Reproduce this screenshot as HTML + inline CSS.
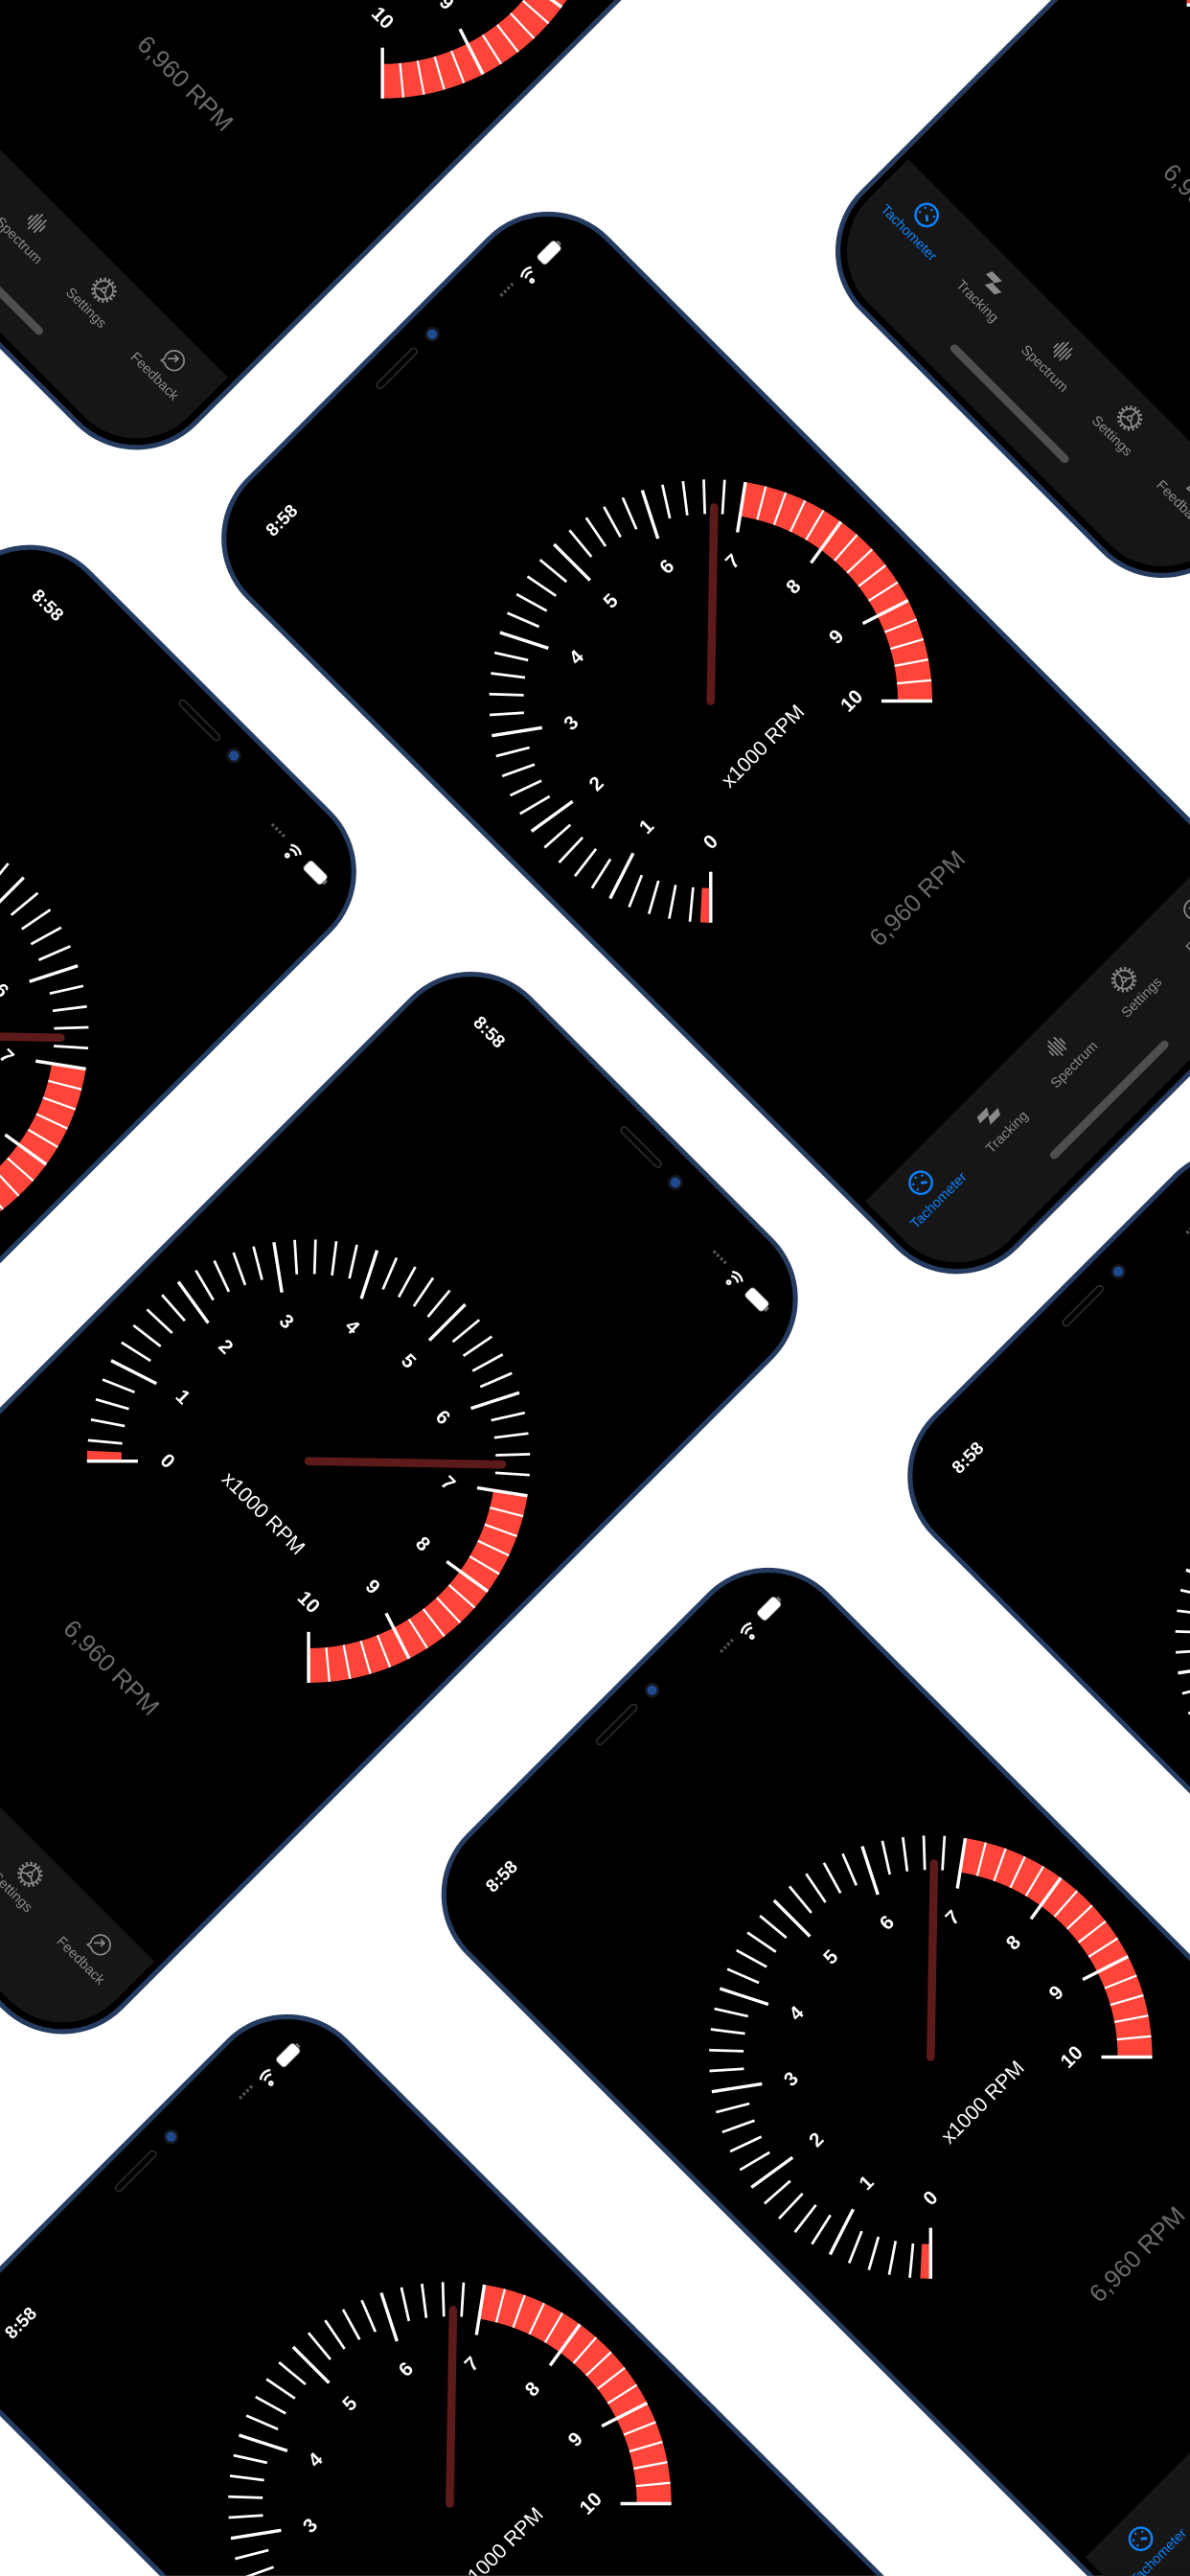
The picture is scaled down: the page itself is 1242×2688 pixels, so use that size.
<!DOCTYPE html>
<html><head><meta charset="utf-8">
<style>
html,body{margin:0;padding:0;width:1242px;height:2688px;overflow:hidden}
body{background:#fff;font-family:"Liberation Sans",sans-serif}
#clip{position:relative;width:1242px;height:2688px;overflow:hidden;background:#fff}
#wrap{position:absolute;left:0;top:0;width:725px;height:1569px;transform:scale(1.713103);transform-origin:0 0;overflow:hidden}
.ph{position:absolute;width:0;height:0}
.ph>*{position:absolute}
.fr{left:-156px;top:-296px;width:312px;height:664px;border-radius:52px;background:#000;border:3px solid #253b60;box-sizing:border-box}
.tb{left:-149px;top:282px;width:298px;height:79px;background:#161616;border-radius:0 0 45px 45px}
.hi{left:-50px;top:341px;width:100px;height:4.5px;border-radius:3px;background:#4f4f4f}
.tm{left:-129px;top:-269px;width:44px;text-align:center;font-weight:bold;font-size:11px;line-height:14px;color:#fff}
.sig{left:84px;top:-266px;width:12px;height:2px;background:repeating-linear-gradient(90deg,#555 0 1.6px,transparent 1.6px 3px)}
.st{left:99px;top:-270px;width:36px;height:14px}
.spk{left:-9px;top:-281px;width:34px;height:5px;border-radius:3px;border:0.6px solid #2a2a2a;box-sizing:border-box}
.cam{left:35px;top:-281px;width:6px;height:6px;border-radius:50%;background:#1f4a8f;box-shadow:0 0 0 1.6px #14171d}
.g{left:-150px;top:-150px;width:300px;height:300px;overflow:visible}
.u{left:-50px;top:34px;width:106px;text-align:center;font-size:12.5px;line-height:16px;color:#fff}
.rpm{left:-56px;top:166px;width:120px;text-align:center;font-size:15px;line-height:18px;color:#6a6a6a}
.ti{top:290px;width:60px;text-align:center;font-size:8.5px;line-height:10px;color:#8a8a8a}
.ti svg{display:block;margin:0 auto 2px;width:16px;height:16px}
.ti.a{color:#0a84ff}
</style></head><body>
<div id="clip">
<svg width="0" height="0" style="position:absolute">
<defs>
<g id="gauge">
<path d="M109.2,-79.35 A135,135 0 0 1 95.46,95.46 L80.6,80.6 A114,114 0 0 0 92.2,-67 Z" fill="#ff453a"/>
<path d="M-95.46,95.46 L-99.85,90.86 L-84.3,76.7 L-80.6,80.6 Z" fill="#ff453a"/>
<g stroke="#fff" stroke-width="1.6">
<line x1="104" x2="135" transform="rotate(135)" stroke-width="2"/>
<line x1="114" x2="135" transform="rotate(140.4)"/><line x1="114" x2="135" transform="rotate(145.8)"/><line x1="114" x2="135" transform="rotate(151.2)"/><line x1="114" x2="135" transform="rotate(156.6)"/>
<line x1="104" x2="135" transform="rotate(162)" stroke-width="2"/>
<line x1="114" x2="135" transform="rotate(167.4)"/><line x1="114" x2="135" transform="rotate(172.8)"/><line x1="114" x2="135" transform="rotate(178.2)"/><line x1="114" x2="135" transform="rotate(183.6)"/>
<line x1="104" x2="135" transform="rotate(189)" stroke-width="2"/>
<line x1="114" x2="135" transform="rotate(194.4)"/><line x1="114" x2="135" transform="rotate(199.8)"/><line x1="114" x2="135" transform="rotate(205.2)"/><line x1="114" x2="135" transform="rotate(210.6)"/>
<line x1="104" x2="135" transform="rotate(216)" stroke-width="2"/>
<line x1="114" x2="135" transform="rotate(221.4)"/><line x1="114" x2="135" transform="rotate(226.8)"/><line x1="114" x2="135" transform="rotate(232.2)"/><line x1="114" x2="135" transform="rotate(237.6)"/>
<line x1="104" x2="135" transform="rotate(243)" stroke-width="2"/>
<line x1="114" x2="135" transform="rotate(248.4)"/><line x1="114" x2="135" transform="rotate(253.8)"/><line x1="114" x2="135" transform="rotate(259.2)"/><line x1="114" x2="135" transform="rotate(264.6)"/>
<line x1="104" x2="135" transform="rotate(270)" stroke-width="2"/>
<line x1="114" x2="135" transform="rotate(275.4)"/><line x1="114" x2="135" transform="rotate(280.8)"/><line x1="114" x2="135" transform="rotate(286.2)"/><line x1="114" x2="135" transform="rotate(291.6)"/>
<line x1="104" x2="135" transform="rotate(297)" stroke-width="2"/>
<line x1="114" x2="135" transform="rotate(302.4)"/><line x1="114" x2="135" transform="rotate(307.8)"/><line x1="114" x2="135" transform="rotate(313.2)"/><line x1="114" x2="135" transform="rotate(318.6)"/>
<line x1="104" x2="135" transform="rotate(324)" stroke-width="2"/>
<line x1="114" x2="135" transform="rotate(329.4)" stroke-width="1.3"/><line x1="114" x2="135" transform="rotate(334.8)" stroke-width="1.3"/><line x1="114" x2="135" transform="rotate(340.2)" stroke-width="1.3"/><line x1="114" x2="135" transform="rotate(345.6)" stroke-width="1.3"/>
<line x1="104" x2="135" transform="rotate(351)" stroke-width="2"/>
<line x1="114" x2="135" transform="rotate(356.4)" stroke-width="1.3"/><line x1="114" x2="135" transform="rotate(361.8)" stroke-width="1.3"/><line x1="114" x2="135" transform="rotate(367.2)" stroke-width="1.3"/><line x1="114" x2="135" transform="rotate(372.6)" stroke-width="1.3"/>
<line x1="104" x2="135" transform="rotate(378)" stroke-width="2"/>
<line x1="114" x2="135" transform="rotate(383.4)" stroke-width="1.3"/><line x1="114" x2="135" transform="rotate(388.8)" stroke-width="1.3"/><line x1="114" x2="135" transform="rotate(394.2)" stroke-width="1.3"/><line x1="114" x2="135" transform="rotate(399.6)" stroke-width="1.3"/>
<line x1="104" x2="135" transform="rotate(405)" stroke-width="2"/>
</g>
<line x1="0" y1="0" x2="118" y2="0" transform="rotate(316)" stroke="#5c1a1a" stroke-width="5" stroke-linecap="round"/>
</g>
<g id="status">
<path d="M2,11 a1,1 0 1 0 0.01,0 M0.5,8.3 a3.8,3.8 0 0 1 5.5,0 M-1,6 a6.5,6.5 0 0 1 8.5,0" fill="none" stroke="#fff" stroke-width="1.4" transform="translate(3,0)"/>
<rect x="17" y="3.5" width="15" height="7.5" rx="2" fill="#fff" stroke="#777" stroke-width="0.5"/>
<rect x="32.3" y="5.8" width="1.3" height="3" fill="#777"/>
</g>
<g id="i-tach" fill="none" stroke="#0a84ff" stroke-width="1.4"><circle cx="8" cy="8" r="6.8"/><line x1="8" y1="8" x2="11" y2="10.5" stroke-width="1.6"/><g fill="#0a84ff" stroke="none"><circle cx="8" cy="3.6" r=".7"/><circle cx="4.2" cy="5.5" r=".7"/><circle cx="11.8" cy="5.5" r=".7"/><circle cx="3.8" cy="9.5" r=".7"/></g></g>
<g id="i-trk" fill="#8a8a8a"><path d="M1.5,4 L10,4 L7,9 L14.5,9 L12.5,13 L4,13 L7,8 L0,8 Z"/></g>
<g id="i-spc" stroke="#8a8a8a" stroke-width="1" stroke-linecap="round"><line x1="3" y1="7" x2="3" y2="10"/><line x1="5" y1="4" x2="5" y2="12"/><line x1="7" y1="2" x2="7" y2="14"/><line x1="9" y1="5" x2="9" y2="12"/><line x1="11" y1="3" x2="11" y2="13"/><line x1="13" y1="6" x2="13" y2="10"/></g>
<g id="i-set" fill="none" stroke="#8a8a8a"><circle cx="8" cy="8" r="6.9" stroke-width="1.6" stroke-dasharray="1.3 1.4"/><circle cx="8" cy="8" r="5.6" stroke-width="1"/><circle cx="8" cy="8" r="1.4" stroke-width="1"/><path d="M8,6.6 L8,2.5 M6.8,8.7 L3.2,10.8 M9.2,8.7 L12.8,10.8" stroke-width="1"/></g>
<g id="i-fb" fill="none" stroke="#8a8a8a" stroke-width="1"><path d="M4,13.5 L4.6,11.3 A6,6 0 1 1 6.6,13.2 Z"/><path d="M6,10 L10.5,5.5 M7.5,5.5 L10.5,5.5 L10.5,8.5"/></g>
</defs>
</svg>

<div id="wrap">

<!-- P0 -->
<div class="ph" style="left:233px;top:-75px;transform:rotate(45deg)">
<div class="fr"></div><div class="tb"></div><div class="hi"></div>
<div class="tm">8:58</div><div class="sig"></div><svg class="st" viewBox="0 0 36 14"><use href="#status"/></svg>
<div class="spk"></div><div class="cam"></div>
<svg class="g" viewBox="-150 -150 300 300"><use href="#gauge"/><g fill="#fff" font-size="12" font-weight="bold" text-anchor="middle" dominant-baseline="central" font-family="Liberation Sans, sans-serif"><text x="-60.8" y="60.8">0</text><text x="-81.8" y="26.6">1</text><text x="-84.9" y="-13.5">2</text><text x="-69.6" y="-50.5">3</text><text x="-39" y="-76.6">4</text><text x="0" y="-86">5</text><text x="39" y="-76.6">6</text><text x="69.6" y="-50.5">7</text><text x="84.9" y="-13.5">8</text><text x="81.8" y="26.6">9</text><text x="60.8" y="60.8">10</text></g></svg>
<div class="u">x1000 RPM</div><div class="rpm">6,960 RPM</div>
<div class="ti a" style="left:-147px"><svg viewBox="0 0 16 16"><use href="#i-tach"/></svg>Tachometer</div>
<div class="ti" style="left:-88px"><svg viewBox="0 0 16 16"><use href="#i-trk"/></svg>Tracking</div>
<div class="ti" style="left:-30px"><svg viewBox="0 0 16 16"><use href="#i-spc"/></svg>Spectrum</div>
<div class="ti" style="left:28px"><svg viewBox="0 0 16 16"><use href="#i-set"/></svg>Settings</div>
<div class="ti" style="left:87px"><svg viewBox="0 0 16 16"><use href="#i-fb"/></svg>Feedback</div>
</div>

<!-- P1 -->
<div class="ph" style="left:433px;top:427px;transform:rotate(-45deg)">
<div class="fr"></div><div class="tb"></div><div class="hi"></div>
<div class="tm">8:58</div><div class="sig"></div><svg class="st" viewBox="0 0 36 14"><use href="#status"/></svg>
<div class="spk"></div><div class="cam"></div>
<svg class="g" viewBox="-150 -150 300 300"><use href="#gauge"/><g fill="#fff" font-size="12" font-weight="bold" text-anchor="middle" dominant-baseline="central" font-family="Liberation Sans, sans-serif"><text x="-60.8" y="60.8">0</text><text x="-81.8" y="26.6">1</text><text x="-84.9" y="-13.5">2</text><text x="-69.6" y="-50.5">3</text><text x="-39" y="-76.6">4</text><text x="0" y="-86">5</text><text x="39" y="-76.6">6</text><text x="69.6" y="-50.5">7</text><text x="84.9" y="-13.5">8</text><text x="81.8" y="26.6">9</text><text x="60.8" y="60.8">10</text></g></svg>
<div class="u">x1000 RPM</div><div class="rpm">6,960 RPM</div>
<div class="ti a" style="left:-147px"><svg viewBox="0 0 16 16"><use href="#i-tach"/></svg>Tachometer</div>
<div class="ti" style="left:-88px"><svg viewBox="0 0 16 16"><use href="#i-trk"/></svg>Tracking</div>
<div class="ti" style="left:-30px"><svg viewBox="0 0 16 16"><use href="#i-spc"/></svg>Spectrum</div>
<div class="ti" style="left:28px"><svg viewBox="0 0 16 16"><use href="#i-set"/></svg>Settings</div>
<div class="ti" style="left:87px"><svg viewBox="0 0 16 16"><use href="#i-fb"/></svg>Feedback</div>
</div>

<!-- P3 -->
<div class="ph" style="left:858px;top:3px;transform:rotate(45deg)">
<div class="fr"></div><div class="tb"></div><div class="hi"></div>
<div class="tm">8:58</div><div class="sig"></div><svg class="st" viewBox="0 0 36 14"><use href="#status"/></svg>
<div class="spk"></div><div class="cam"></div>
<svg class="g" viewBox="-150 -150 300 300"><use href="#gauge"/><g fill="#fff" font-size="12" font-weight="bold" text-anchor="middle" dominant-baseline="central" font-family="Liberation Sans, sans-serif"><text x="-60.8" y="60.8">0</text><text x="-81.8" y="26.6">1</text><text x="-84.9" y="-13.5">2</text><text x="-69.6" y="-50.5">3</text><text x="-39" y="-76.6">4</text><text x="0" y="-86">5</text><text x="39" y="-76.6">6</text><text x="69.6" y="-50.5">7</text><text x="84.9" y="-13.5">8</text><text x="81.8" y="26.6">9</text><text x="60.8" y="60.8">10</text></g></svg>
<div class="u">x1000 RPM</div><div class="rpm">6,960 RPM</div>
<div class="ti a" style="left:-147px"><svg viewBox="0 0 16 16"><use href="#i-tach"/></svg>Tachometer</div>
<div class="ti" style="left:-88px"><svg viewBox="0 0 16 16"><use href="#i-trk"/></svg>Tracking</div>
<div class="ti" style="left:-30px"><svg viewBox="0 0 16 16"><use href="#i-spc"/></svg>Spectrum</div>
<div class="ti" style="left:28px"><svg viewBox="0 0 16 16"><use href="#i-set"/></svg>Settings</div>
<div class="ti" style="left:87px"><svg viewBox="0 0 16 16"><use href="#i-fb"/></svg>Feedback</div>
</div>

<!-- P4 -->
<div class="ph" style="left:-81px;top:630px;transform:rotate(45deg)">
<div class="fr"></div><div class="tb"></div><div class="hi"></div>
<div class="tm">8:58</div><div class="sig"></div><svg class="st" viewBox="0 0 36 14"><use href="#status"/></svg>
<div class="spk"></div><div class="cam"></div>
<svg class="g" viewBox="-150 -150 300 300"><use href="#gauge"/><g fill="#fff" font-size="12" font-weight="bold" text-anchor="middle" dominant-baseline="central" font-family="Liberation Sans, sans-serif"><text x="-60.8" y="60.8">0</text><text x="-81.8" y="26.6">1</text><text x="-84.9" y="-13.5">2</text><text x="-69.6" y="-50.5">3</text><text x="-39" y="-76.6">4</text><text x="0" y="-86">5</text><text x="39" y="-76.6">6</text><text x="69.6" y="-50.5">7</text><text x="84.9" y="-13.5">8</text><text x="81.8" y="26.6">9</text><text x="60.8" y="60.8">10</text></g></svg>
<div class="u">x1000 RPM</div><div class="rpm">6,960 RPM</div>
<div class="ti a" style="left:-147px"><svg viewBox="0 0 16 16"><use href="#i-tach"/></svg>Tachometer</div>
<div class="ti" style="left:-88px"><svg viewBox="0 0 16 16"><use href="#i-trk"/></svg>Tracking</div>
<div class="ti" style="left:-30px"><svg viewBox="0 0 16 16"><use href="#i-spc"/></svg>Spectrum</div>
<div class="ti" style="left:28px"><svg viewBox="0 0 16 16"><use href="#i-set"/></svg>Settings</div>
<div class="ti" style="left:87px"><svg viewBox="0 0 16 16"><use href="#i-fb"/></svg>Feedback</div>
</div>

<!-- P5 -->
<div class="ph" style="left:188px;top:890px;transform:rotate(45deg)">
<div class="fr"></div><div class="tb"></div><div class="hi"></div>
<div class="tm">8:58</div><div class="sig"></div><svg class="st" viewBox="0 0 36 14"><use href="#status"/></svg>
<div class="spk"></div><div class="cam"></div>
<svg class="g" viewBox="-150 -150 300 300"><use href="#gauge"/><g fill="#fff" font-size="12" font-weight="bold" text-anchor="middle" dominant-baseline="central" font-family="Liberation Sans, sans-serif"><text x="-60.8" y="60.8">0</text><text x="-81.8" y="26.6">1</text><text x="-84.9" y="-13.5">2</text><text x="-69.6" y="-50.5">3</text><text x="-39" y="-76.6">4</text><text x="0" y="-86">5</text><text x="39" y="-76.6">6</text><text x="69.6" y="-50.5">7</text><text x="84.9" y="-13.5">8</text><text x="81.8" y="26.6">9</text><text x="60.8" y="60.8">10</text></g></svg>
<div class="u">x1000 RPM</div><div class="rpm">6,960 RPM</div>
<div class="ti a" style="left:-147px"><svg viewBox="0 0 16 16"><use href="#i-tach"/></svg>Tachometer</div>
<div class="ti" style="left:-88px"><svg viewBox="0 0 16 16"><use href="#i-trk"/></svg>Tracking</div>
<div class="ti" style="left:-30px"><svg viewBox="0 0 16 16"><use href="#i-spc"/></svg>Spectrum</div>
<div class="ti" style="left:28px"><svg viewBox="0 0 16 16"><use href="#i-set"/></svg>Settings</div>
<div class="ti" style="left:87px"><svg viewBox="0 0 16 16"><use href="#i-fb"/></svg>Feedback</div>
</div>

<!-- P6 -->
<div class="ph" style="left:851px;top:998px;transform:rotate(-45deg)">
<div class="fr"></div><div class="tb"></div><div class="hi"></div>
<div class="tm">8:58</div><div class="sig"></div><svg class="st" viewBox="0 0 36 14"><use href="#status"/></svg>
<div class="spk"></div><div class="cam"></div>
<svg class="g" viewBox="-150 -150 300 300"><use href="#gauge"/><g fill="#fff" font-size="12" font-weight="bold" text-anchor="middle" dominant-baseline="central" font-family="Liberation Sans, sans-serif"><text x="-60.8" y="60.8">0</text><text x="-81.8" y="26.6">1</text><text x="-84.9" y="-13.5">2</text><text x="-69.6" y="-50.5">3</text><text x="-39" y="-76.6">4</text><text x="0" y="-86">5</text><text x="39" y="-76.6">6</text><text x="69.6" y="-50.5">7</text><text x="84.9" y="-13.5">8</text><text x="81.8" y="26.6">9</text><text x="60.8" y="60.8">10</text></g></svg>
<div class="u">x1000 RPM</div><div class="rpm">6,960 RPM</div>
<div class="ti a" style="left:-147px"><svg viewBox="0 0 16 16"><use href="#i-tach"/></svg>Tachometer</div>
<div class="ti" style="left:-88px"><svg viewBox="0 0 16 16"><use href="#i-trk"/></svg>Tracking</div>
<div class="ti" style="left:-30px"><svg viewBox="0 0 16 16"><use href="#i-spc"/></svg>Spectrum</div>
<div class="ti" style="left:28px"><svg viewBox="0 0 16 16"><use href="#i-set"/></svg>Settings</div>
<div class="ti" style="left:87px"><svg viewBox="0 0 16 16"><use href="#i-fb"/></svg>Feedback</div>
</div>

<!-- P7 -->
<div class="ph" style="left:567px;top:1253px;transform:rotate(-45deg)">
<div class="fr"></div><div class="tb"></div><div class="hi"></div>
<div class="tm">8:58</div><div class="sig"></div><svg class="st" viewBox="0 0 36 14"><use href="#status"/></svg>
<div class="spk"></div><div class="cam"></div>
<svg class="g" viewBox="-150 -150 300 300"><use href="#gauge"/><g fill="#fff" font-size="12" font-weight="bold" text-anchor="middle" dominant-baseline="central" font-family="Liberation Sans, sans-serif"><text x="-60.8" y="60.8">0</text><text x="-81.8" y="26.6">1</text><text x="-84.9" y="-13.5">2</text><text x="-69.6" y="-50.5">3</text><text x="-39" y="-76.6">4</text><text x="0" y="-86">5</text><text x="39" y="-76.6">6</text><text x="69.6" y="-50.5">7</text><text x="84.9" y="-13.5">8</text><text x="81.8" y="26.6">9</text><text x="60.8" y="60.8">10</text></g></svg>
<div class="u">x1000 RPM</div><div class="rpm">6,960 RPM</div>
<div class="ti a" style="left:-147px"><svg viewBox="0 0 16 16"><use href="#i-tach"/></svg>Tachometer</div>
<div class="ti" style="left:-88px"><svg viewBox="0 0 16 16"><use href="#i-trk"/></svg>Tracking</div>
<div class="ti" style="left:-30px"><svg viewBox="0 0 16 16"><use href="#i-spc"/></svg>Spectrum</div>
<div class="ti" style="left:28px"><svg viewBox="0 0 16 16"><use href="#i-set"/></svg>Settings</div>
<div class="ti" style="left:87px"><svg viewBox="0 0 16 16"><use href="#i-fb"/></svg>Feedback</div>
</div>

<!-- P8 -->
<div class="ph" style="left:274px;top:1525px;transform:rotate(-45deg)">
<div class="fr"></div><div class="tb"></div><div class="hi"></div>
<div class="tm">8:58</div><div class="sig"></div><svg class="st" viewBox="0 0 36 14"><use href="#status"/></svg>
<div class="spk"></div><div class="cam"></div>
<svg class="g" viewBox="-150 -150 300 300"><use href="#gauge"/><g fill="#fff" font-size="12" font-weight="bold" text-anchor="middle" dominant-baseline="central" font-family="Liberation Sans, sans-serif"><text x="-60.8" y="60.8">0</text><text x="-81.8" y="26.6">1</text><text x="-84.9" y="-13.5">2</text><text x="-69.6" y="-50.5">3</text><text x="-39" y="-76.6">4</text><text x="0" y="-86">5</text><text x="39" y="-76.6">6</text><text x="69.6" y="-50.5">7</text><text x="84.9" y="-13.5">8</text><text x="81.8" y="26.6">9</text><text x="60.8" y="60.8">10</text></g></svg>
<div class="u">x1000 RPM</div><div class="rpm">6,960 RPM</div>
<div class="ti a" style="left:-147px"><svg viewBox="0 0 16 16"><use href="#i-tach"/></svg>Tachometer</div>
<div class="ti" style="left:-88px"><svg viewBox="0 0 16 16"><use href="#i-trk"/></svg>Tracking</div>
<div class="ti" style="left:-30px"><svg viewBox="0 0 16 16"><use href="#i-spc"/></svg>Spectrum</div>
<div class="ti" style="left:28px"><svg viewBox="0 0 16 16"><use href="#i-set"/></svg>Settings</div>
<div class="ti" style="left:87px"><svg viewBox="0 0 16 16"><use href="#i-fb"/></svg>Feedback</div>
</div>

</div>
</div>
</body></html>
